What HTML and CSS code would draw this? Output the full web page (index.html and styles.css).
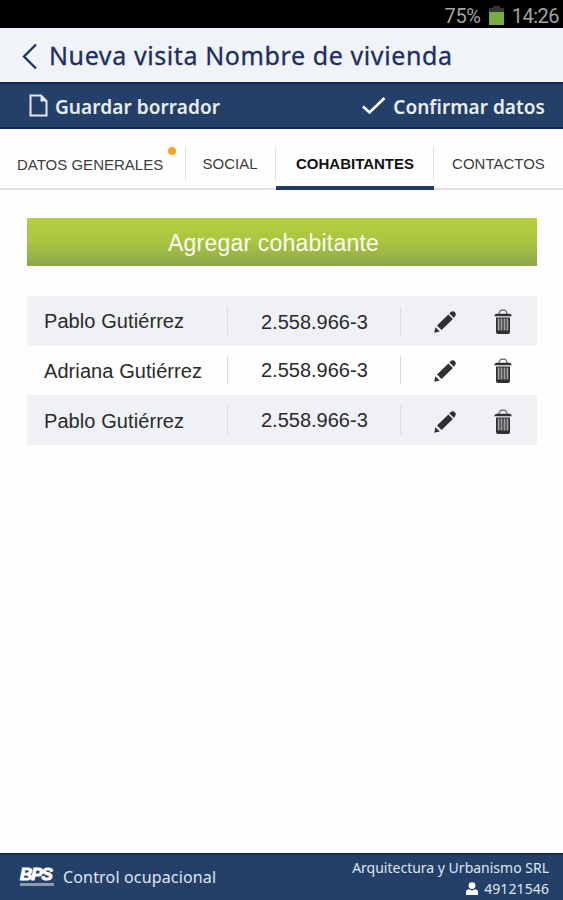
FILE: index.html
```html
<!DOCTYPE html>
<html lang="es">
<head>
<meta charset="utf-8">
<title>Nueva visita</title>
<link rel="stylesheet" href="styles.css">
</head>
<body>
<svg class="defs" width="0" height="0" aria-hidden="true">
  <symbol id="pencil" viewBox="0 0 24 24">
    <path d="M1.2 22.8 2.4 17.2 6.8 21.5Z"/>
    <path d="M4 15.4 15.4 4.6 19.9 8.9 8.6 20Z"/>
    <path d="M16.3 3.5 18 1.8Q20 .4 21.8 2.1Q23.6 4 22.4 5.8L20.9 7.7Z"/>
  </symbol>
  <symbol id="trash" viewBox="0 0 18 26">
    <path d="M4.8 5 6 2.2Q6.4 1.3 7.4 1.3H10.6Q11.6 1.3 12 2.2L13.2 5" fill="none" stroke="#777" stroke-width="1.4"/>
    <path d="M.3 7.3Q.3 4.8 2.5 4.8H15.5Q17.7 4.8 17.7 7.3Z"/>
    <path d="M2 8.6H16V23Q16 25 14 25H4Q2 25 2 23Z"/>
    <path d="M4.6 9.5V21.5M7.5 9.5V21.5M10.5 9.5V21.5M13.4 9.5V21.5" stroke="#a0a0a2" stroke-width="1.8"/>
  </symbol>
</svg>
<div class="screen">
  <div class="status">
    <span class="percent">75%</span>
    <svg class="battery" width="15" height="20" viewBox="0 0 15 20"><path d="M4 0H11V2H15V6H0V2H4Z" fill="#34362f"/><path d="M0 6H15V19H0Z" fill="#76ac42"/></svg>
    <span class="clock">14:26</span>
  </div>
  <header class="title">
    <svg width="16" height="27" viewBox="0 0 16 27"><path d="M15 1.5 3 13.5 15 25.5" fill="none" stroke="#1d3261" stroke-width="2.3"/></svg>
    <h1>Nueva visita Nombre de vivienda</h1>
  </header>
  <nav class="toolbar">
    <a class="action save">
      <svg width="19" height="23" viewBox="0 0 19 23"><path d="M1.5 1.5H12L17.5 7V21.5H1.5Z" fill="none" stroke="#e3e8f0" stroke-width="2"/><path d="M11.5 1V7.5H18Z" fill="#e3e8f0"/></svg>
      <span>Guardar borrador</span>
    </a>
    <a class="action confirm">
      <svg width="25" height="20" viewBox="0 0 25 20"><path d="M2 10.5 8.5 16.5 23.5 2" fill="none" stroke="#fff" stroke-width="2.6"/></svg>
      <span>Confirmar datos</span>
    </a>
  </nav>
  <div class="tabs">
    <div class="tab generales"><span>DATOS GENERALES</span><i class="dot"></i></div>
    <div class="tab social"><span>SOCIAL</span></div>
    <div class="tab active"><span>COHABITANTES</span></div>
    <div class="tab contactos"><span>CONTACTOS</span></div>
  </div>
  <main>
    <button class="add"><span>Agregar cohabitante</span></button>
    <div class="list">
      <div class="row"><div class="name"><span>Pablo Gutiérrez</span></div><div class="doc"><span>2.558.966-3</span></div><div class="tools"><svg class="pencil"><use href="#pencil"/></svg><svg class="trash"><use href="#trash"/></svg></div></div>
      <div class="row"><div class="name"><span>Adriana Gutiérrez</span></div><div class="doc"><span>2.558.966-3</span></div><div class="tools"><svg class="pencil"><use href="#pencil"/></svg><svg class="trash"><use href="#trash"/></svg></div></div>
      <div class="row"><div class="name"><span>Pablo Gutiérrez</span></div><div class="doc"><span>2.558.966-3</span></div><div class="tools"><svg class="pencil"><use href="#pencil"/></svg><svg class="trash"><use href="#trash"/></svg></div></div>
    </div>
  </main>
  <footer>
    <div class="brand">
      <div class="logo"><b>BPS</b><i></i></div>
      <span class="product">Control ocupacional</span>
    </div>
    <div class="account">
      <span class="company">Arquitectura y Urbanismo SRL</span>
      <div class="user"><svg width="12" height="13" viewBox="0 0 12 13"><circle cx="6" cy="3.6" r="3.4"/><path d="M0 13V10Q0 7.3 3 7.3Q6 9 9 7.3Q12 7.3 12 10V13Z"/></svg><span>49121546</span></div>
    </div>
  </footer>
</div>
</body>
</html>
```

FILE: styles.css
```css
* { box-sizing: border-box; }
body { margin: 0; background: #fefefe; font-family: "Liberation Sans", Arial, sans-serif; }
.defs { display: block; height: 0; }
.screen { width: 563px; height: 900px; display: flex; flex-direction: column; overflow: hidden; white-space: nowrap; }
svg { flex: none; display: block; }

.status { height: 28px; background: #000; display: flex; align-items: center; justify-content: flex-end; padding: 4px 4px 0 0; font: 20px/24px Roboto, sans-serif; color: #a3a3a3; }
.battery { margin: 0 8px 0 8px; }
.percent { letter-spacing: -.3px; }
.clock { letter-spacing: -.5px; }

.title { height: 54px; background: #f0f3f7; display: flex; align-items: center; padding: 2px 0 0 21px; gap: 12px; }
.title h1 { margin: -2px 0 0; font: 400 25px/32px "Noto Sans", sans-serif; color: #1d2e60; letter-spacing: .6px; -webkit-text-stroke: .3px #1d2e60; }

.toolbar { height: 47px; background: #254068; border-top: 2px solid #12275c; border-bottom: 2px solid #12275c; display: flex; align-items: center; justify-content: space-between; padding: 2px 18px 0 29px; color: #e9eef5; font: 600 19px/26px "Noto Sans", sans-serif; }
.action { display: flex; align-items: center; }
.save { gap: 7px; letter-spacing: .08px; }
.save svg { margin-top: -2px; }
.confirm { gap: 7px; letter-spacing: .05px; }
.confirm svg { margin-top: -2px; }

.tabs { height: 61px; display: grid; grid-template-columns: 186px 90px 158px 129px; border-bottom: 2px solid #dfe0e2; font-size: 15px; color: #3c3c3c; }
.tab { position: relative; height: 61px; display: flex; align-items: center; justify-content: center; padding-top: 8px; }
.tab::after { content: ""; position: absolute; right: 0; top: 18px; width: 1px; height: 33px; background: #dfdfe2; }
.contactos::after { display: none; }
.generales { justify-content: flex-start; padding: 10px 0 0 17px; }
.social { padding-right: 2px; }
.dot { position: absolute; left: 168px; top: 18px; width: 8px; height: 8px; border-radius: 50%; background: #f9a12d; }
.active { color: #111; font-weight: bold; border-bottom: 4px solid #223a69; padding-top: 12px; }

main { flex: 1; padding: 28px 26px 0 27px; }
.add { display: flex; justify-content: center; align-items: center; width: 100%; height: 48px; border: 0; padding: 1px 17px 0 0; background: linear-gradient(#b5d13d, #a9c441 50%, #8da74d); color: #fbfdef; font: 23px/28px "Liberation Sans", sans-serif; letter-spacing: .2px; }
.list { margin-top: 30px; }
.row { height: 49.67px; display: grid; grid-template-columns: 201px 173px 1fr; align-items: center; font-size: 20px; color: #2a2a2c; }
.row:nth-child(odd) { background: #eff1f4; }
.name, .doc { height: 28px; border-right: 1px solid #d9dbdf; display: flex; align-items: center; }
.name { padding: 2px 0 0 17px; letter-spacing: .08px; }
.doc { padding-left: 33px; }
.row:first-child .doc { padding-top: 3px; }
.tools { display: flex; align-items: center; padding: 3px 0 0 32px; gap: 37px; fill: #303032; }
.pencil { width: 24px; height: 24px; }
.trash { width: 18px; height: 26px; }
.row:nth-child(2) .tools { padding-top: 1px; }

footer { height: 47px; background: #254068; border-top: 2px solid #12275c; display: flex; justify-content: space-between; padding: 0 14px 0 20px; color: #dfe6ef; font-family: "Noto Sans", sans-serif; }
.brand { display: flex; align-items: center; gap: 9px; padding-bottom: 2px; }
.logo { width: 34px; color: #fff; }
.logo b { display: block; font: italic 900 17px/14px "Liberation Sans", sans-serif; letter-spacing: -1px; -webkit-text-stroke: 1px #fff; }
.logo i { display: block; height: 3px; background: #8d9bb0; margin-top: 1px; }
.product { font-size: 16px; letter-spacing: .16px; }
.account { display: flex; flex-direction: column; align-items: flex-end; font-size: 14px; line-height: 21px; padding-top: 2px; }
.user { display: flex; align-items: center; gap: 6px; letter-spacing: .1px; }
.user svg { fill: #fff; }
```
